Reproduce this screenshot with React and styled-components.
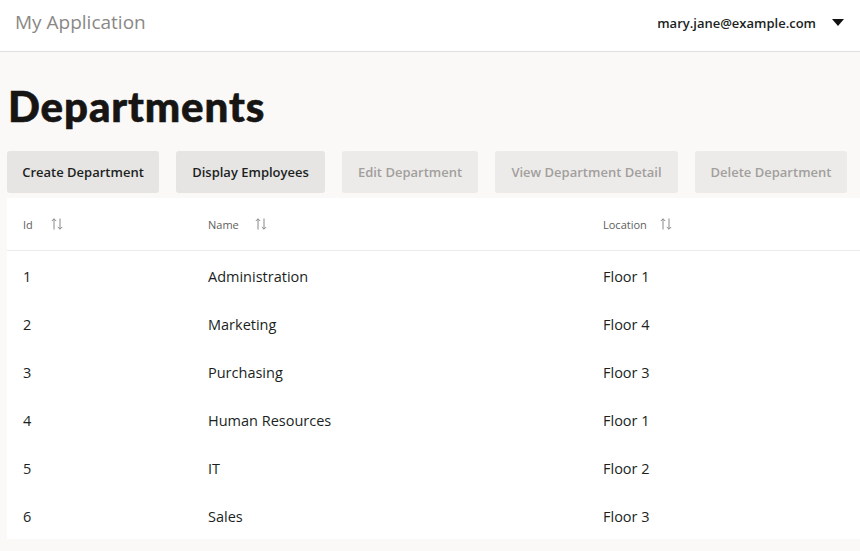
import React from "react";
import styled, { createGlobalStyle } from "styled-components";

const Global = createGlobalStyle`
  html, body { margin: 0; padding: 0; background: #faf9f8; }
  body { font-family: "Open Sans", "Noto Sans", sans-serif; color: #201f1e; }
  * { box-sizing: border-box; }
`;

const Page = styled.div`
  width: 860px;
  min-height: 551px;
  background: #faf9f8;
`;

const Header = styled.header`
  height: 52px;
  background: #ffffff;
  border-bottom: 1px solid #e1dfdd;
  display: flex;
  align-items: center;
  justify-content: space-between;
  padding: 0 16px 0 15px;
`;

const AppTitle = styled.div`
  font-size: 19px;
  color: #8a8886;
  margin-top: -8px;
`;

const UserMenu = styled.div`
  display: flex;
  align-items: center;
  gap: 16px;
  font-size: 13px;
  font-weight: 600;
  color: #201f1e;
  margin-top: -5px;
`;

const Main = styled.main`
  padding: 28px 0 0 7px;
`;

const Title = styled.h1`
  margin: 0 0 0 1px;
  font-family: "Lato", sans-serif;
  font-weight: 900;
  font-size: 42px;
  line-height: 52px;
  color: #161514;
  letter-spacing: 0.9px;
  -webkit-text-stroke: 0.6px #161514;
`;

const Toolbar = styled.div`
  display: flex;
  gap: 17px;
  margin-top: 19px;
`;

const Button = styled.button`
  height: 42px;
  padding: 0;
  border: none;
  border-radius: 3px;
  white-space: nowrap;
  font-family: "Open Sans", sans-serif;
  font-size: 13px;
  font-weight: 600;
  background: ${(p) => (p.disabled ? "#edebe9" : "#e6e5e4")};
  color: ${(p) => (p.disabled ? "#a19f9d" : "#201f1e")};
  width: ${(p) => p.w}px;
`;

const Table = styled.div`
  margin-top: 5px;
  width: 853px;
  background: #ffffff;
`;

const Grid = styled.div`
  display: grid;
  grid-template-columns: 185px 395px 1fr;
`;

const HeadRow = styled(Grid)`
  height: 53px;
  border-bottom: 1px solid #edebe9;
  align-items: center;
`;

const HeadCell = styled.div`
  display: flex;
  align-items: center;
  gap: ${(p) => p.gap}px;
  padding-left: 16px;
  font-size: 11px;
  color: #605e5c;
`;

const Row = styled(Grid)`
  height: 48px;
  align-items: center;
`;

const Cell = styled.div`
  padding-left: 16px;
  font-size: 14.5px;
  color: #201f1e;
  padding-top: 2px;
`;

const SortIcon = () => (
  <svg width="12" height="12" viewBox="0 0 12 12" fill="none" stroke="#8a8886" strokeWidth="1">
    <path d="M3 11.5V0.8M0.8 3L3 0.8L5.2 3" />
    <path d="M9 0.5V11.2M6.8 9L9 11.2L11.2 9" />
  </svg>
);

const Caret = () => (
  <svg width="12" height="8" viewBox="0 0 12 8">
    <path d="M0 0H12L6 7Z" fill="#111" />
  </svg>
);

const columns = [
  { label: "Id", gap: 18 },
  { label: "Name", gap: 16 },
  { label: "Location", gap: 13 },
];

const rows = [
  [1, "Administration", "Floor 1"],
  [2, "Marketing", "Floor 4"],
  [3, "Purchasing", "Floor 3"],
  [4, "Human Resources", "Floor 1"],
  [5, "IT", "Floor 2"],
  [6, "Sales", "Floor 3"],
];

const buttons = [
  { label: "Create Department", w: 152 },
  { label: "Display Employees", w: 149 },
  { label: "Edit Department", w: 136, disabled: true },
  { label: "View Department Detail", w: 183, disabled: true },
  { label: "Delete Department", w: 152, disabled: true },
];

export default function App() {
  return (
    <Page>
      <Global />
      <Header>
        <AppTitle>My Application</AppTitle>
        <UserMenu>
          <span>mary.jane@example.com</span>
          <Caret />
        </UserMenu>
      </Header>
      <Main>
        <Title>Departments</Title>
        <Toolbar>
          {buttons.map((b) => (
            <Button key={b.label} disabled={b.disabled} w={b.w}>
              {b.label}
            </Button>
          ))}
        </Toolbar>
        <Table>
          <HeadRow>
            {columns.map((c) => (
              <HeadCell key={c.label} gap={c.gap}>
                {c.label}
                <SortIcon />
              </HeadCell>
            ))}
          </HeadRow>
          {rows.map((r) => (
            <Row key={r[0]}>
              <Cell>{r[0]}</Cell>
              <Cell>{r[1]}</Cell>
              <Cell>{r[2]}</Cell>
            </Row>
          ))}
        </Table>
      </Main>
    </Page>
  );
}
